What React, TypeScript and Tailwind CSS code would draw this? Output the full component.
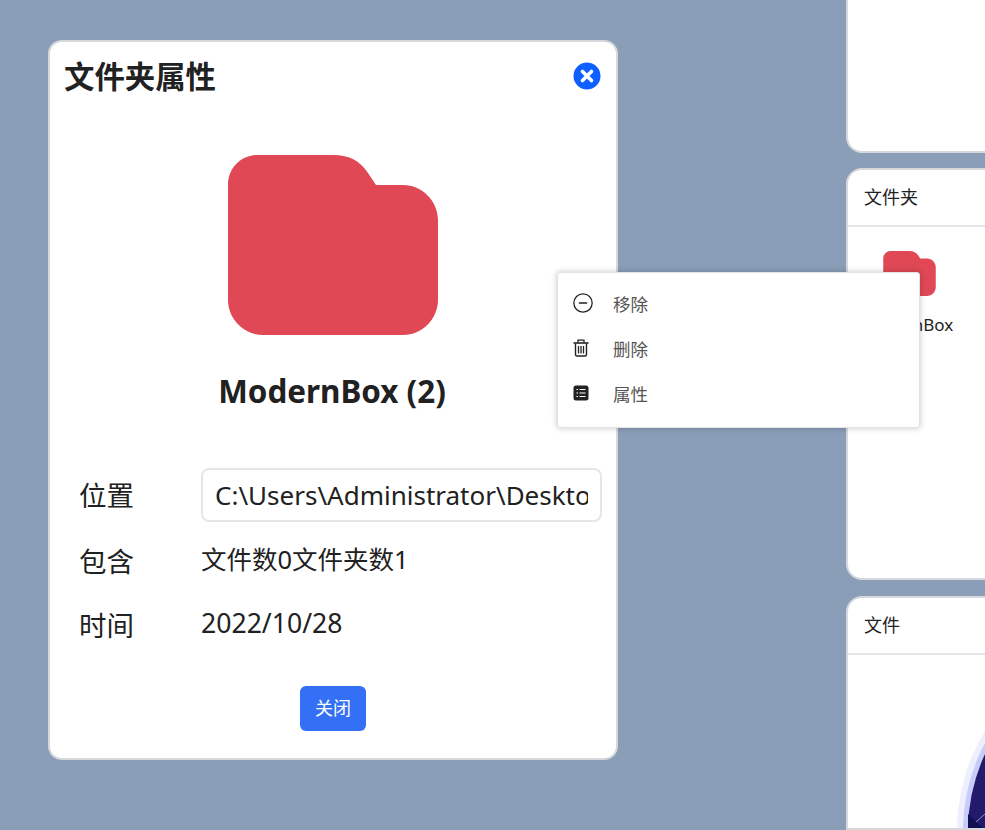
import { MinusCircle } from 'lucide-react';

const font = { fontFamily: '"Noto Sans", "Noto Sans CJK SC", sans-serif' };

function FolderIcon({ className }: { className: string }) {
  return (
    <svg className={className} viewBox="0 0 210 180" fill="#df4854">
      <path d="M30 0H105C122 0 132 6 140 18L148 30H175C194 30 210 46 210 65V145C210 164 194 180 175 180H35C16 180 0 164 0 145V30C0 13 13 0 30 0Z" />
    </svg>
  );
}

function Row({ label, children, className }: { label: string; children: React.ReactNode; className: string }) {
  return (
    <div className={`flex items-center ${className}`}>
      <div className="w-[151px] pl-[29px] pt-[2px] text-[27.5px] leading-[40px]">{label}</div>
      <div className="flex-1 min-w-0 leading-[40px]">{children}</div>
    </div>
  );
}

function MenuItem({ icon, label }: { icon: React.ReactNode; label: string }) {
  return (
    <div className="flex h-[45px] items-center pl-[15px] text-[#555] text-[17.5px]">
      <div className="flex w-[40px] -mt-[4px] text-[#222]">{icon}</div>
      <span>{label}</span>
    </div>
  );
}

function SideCard({ title, className, children }: { title?: string; className: string; children?: React.ReactNode }) {
  return (
    <div className={`w-[200px] bg-white border-2 border-[#d6d8dc] overflow-hidden ${className}`}>
      {title && (
        <div className="h-[57px] pl-[16px] flex items-center border-b-2 border-[#e6e6e8] text-[18px] text-[#222]">{title}</div>
      )}
      {children}
    </div>
  );
}

export default function App() {
  return (
    <div className="relative h-[830px] w-[985px] overflow-hidden bg-[#8a9eb8]" style={font}>
      {/* right column behind the dialog */}
      <div className="flex flex-col gap-[16px] pl-[846px] -mt-[20px] h-[850px]">
        <SideCard className="h-[173px] -mb-[1px] shrink-0 rounded-b-[16px]" />
        <SideCard title="文件夹" className="h-[412px] shrink-0 rounded-[16px]">
          <div className="pt-[24px] pl-[35px]">
            <FolderIcon className="w-[53px] h-[45px]" />
            <div className="mt-[16px] -ml-[30px] w-[107px] overflow-hidden whitespace-nowrap text-center text-[17px] text-[#222]">ModernBox</div>
          </div>
        </SideCard>
        <SideCard title="文件" className="flex-1 rounded-t-[16px]">
          <svg className="w-[137px] h-[175px]" viewBox="0 0 137 175">
            <circle cx="303" cy="176" r="194" fill="#eeeffe" />
            <circle cx="303" cy="176" r="188" fill="#c6cdfb" />
            <circle cx="303" cy="176" r="183" fill="#231a6e" />
            <path d="M120 159L137 175H120Z" fill="#14104f" />
            <path d="M128 167L137 159" stroke="#8f8fc0" strokeWidth="1" />
          </svg>
        </SideCard>
      </div>

      {/* dialog */}
      <div className="absolute left-[48px] top-[40px] w-[570px] h-[720px] rounded-[14px] bg-white border-2 border-[#d6d8dc] text-[#212121]">
        <div className="flex items-center justify-between pl-[14px] pr-[15px] pt-[12px]">
          <div className="text-[30.4px] font-bold leading-[42px] mt-[2px]">文件夹属性</div>
          <svg className="w-[28px] h-[28px]" viewBox="0 0 28 28">
            <circle cx="14" cy="14" r="13.5" fill="#0d60ff" />
            <path d="M9.5 9.5L18.5 18.5M18.5 9.5L9.5 18.5" stroke="#fff" strokeWidth="3.6" strokeLinecap="round" />
          </svg>
        </div>
        <div className="flex justify-center pt-[57px]">
          <FolderIcon className="w-[210px] h-[180px]" />
        </div>
        <div className="mt-[34px] text-center text-[31.4px] font-bold leading-[44px] -ml-[2px]">ModernBox (2)</div>
        <div className="pt-[54px]">
          <Row label="位置" className="h-[56px]">
            <input
              readOnly
              value="C:\Users\Administrator\Desktop\ModernBox (2)"
              className="block w-[401px] h-[54px] rounded-[8px] border-2 border-[#e6e6e6] px-[12px] text-[26px] outline-none"
            />
          </Row>
          <Row label="包含" className="h-[64px] mt-[6px]"><span className="text-[25.5px]">文件数0文件夹数1</span></Row>
          <Row label="时间" className="h-[64px]"><span className="text-[26.6px]">2022/10/28</span></Row>
        </div>
        <div className="flex justify-center mt-[29px]">
          <button className="w-[66px] h-[45px] rounded-[6px] bg-[#3370f5] text-white text-[18px]">关闭</button>
        </div>
      </div>

      {/* context menu */}
      <div className="absolute left-[557px] top-[272px] w-[363px] h-[156px] bg-white rounded-[3px] border border-[#e2e2e2] shadow-[0_0_6px_rgba(0,0,0,0.22)] pt-[9px]">
        <MenuItem icon={<MinusCircle size={22} strokeWidth={1.4} className="-ml-[1px]" />} label="移除" />
        <MenuItem
          icon={
            <svg className="w-[16px] h-[18px]" viewBox="0 0 16 18" fill="none" stroke="#222">
              <path d="M0.5 4h15" strokeWidth="1.6" />
              <path d="M5 3.5V1.2h6V3.5" strokeWidth="1.3" />
              <path d="M2.5 4.5v11a1.5 1.5 0 0 0 1.5 1.5h8a1.5 1.5 0 0 0 1.5-1.5v-11" strokeWidth="1.4" />
              <path d="M5.5 7v7.5M8 7v7.5M10.5 7v7.5" strokeWidth="1.3" />
            </svg>
          }
          label="删除"
        />
        <MenuItem
          icon={
            <svg className="w-[16px] h-[16px]" viewBox="0 0 16 16">
              <rect x="0.5" y="0.5" width="15" height="15" rx="2.5" fill="#222" />
              <path d="M3.5 4.5h1.5M6.5 4.5h6M3.5 8h1.5M6.5 8h6M3.5 11.5h1.5M6.5 11.5h6" stroke="#fff" strokeWidth="1.2" />
            </svg>
          }
          label="属性"
        />
      </div>
    </div>
  );
}
